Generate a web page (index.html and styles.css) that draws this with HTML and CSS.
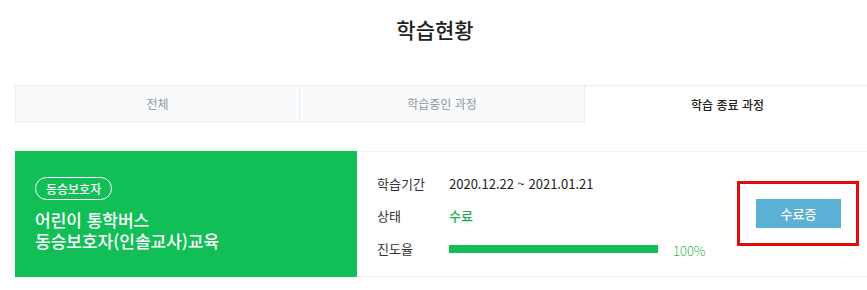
FILE: index.html
```html
<!DOCTYPE html>
<html lang="ko">
<head>
<meta charset="utf-8">
<link rel="stylesheet" href="styles.css">
</head>
<body>
<div class="page">
  <h1 class="title">학습현황</h1>
  <div class="tabs">
    <div class="tab">전체</div>
    <div class="tab">학습중인 과정</div>
    <div class="tab active">학습 종료 과정</div>
  </div>
  <div class="card">
    <div class="course">
      <span class="badge">동승보호자</span>
      <div class="course-name">어린이 통학버스<br>동승보호자(인솔교사)교육</div>
    </div>
    <div class="info">
      <div class="rows">
        <div class="row"><span class="label">학습기간</span><span class="value">2020.12.22 ~ 2021.01.21</span></div>
        <div class="row"><span class="label">상태</span><span class="value status">수료</span></div>
        <div class="row"><span class="label">진도율</span><span class="bar"><span class="fill" style="width:100%"></span></span><span class="pct">100%</span></div>
      </div>
      <div class="highlight">
        <button class="cert">수료증</button>
      </div>
    </div>
  </div>
</div>
</body>
</html>
```

FILE: styles.css
```css
* { box-sizing: border-box; }
body {
  margin: 0;
  background: #fff;
  font-family: "Noto Sans CJK KR", "Noto Sans", sans-serif;
  color: #222;
}
.page {
  padding: 0 0 0 15px;
  width: 885px;
}
.title {
  margin: 0;
  height: 85px;
  padding-top: 14px;
  font-size: 21px;
  font-weight: 500;
  line-height: 30px;
  text-align: center;
  width: 840px;
  color: #222;
}
.tabs {
  display: flex;
  height: 37px;
}
.tab {
  width: 285px;
  display: flex;
  align-items: center;
  justify-content: center;
  font-size: 12px;
  color: #8e979f;
  background: #f8fafc;
  border: 1px solid #e9eef2;
  border-left: none;
}
.tab:first-child { border-left: 1px solid #e9eef2; }
.tab.active {
  background: #fff;
  color: #222;
  font-weight: 500;
  border-bottom: none;
  border-right: none;
}
.card {
  margin-top: 29px;
  display: flex;
  height: 126px;
  border-top: 1px solid #f0f4f6;
  border-bottom: 1px solid #eef2f4;
}
.course {
  width: 342px;
  background: #12bf57;
  color: #fff;
  padding: 24px 20px 0;
  margin: -1px 0;
  height: 126px;
}
.badge {
  display: inline-block;
  height: 23px;
  line-height: 21px;
  padding: 0 10px;
  border: 1px solid #fff;
  border-radius: 12px;
  font-size: 12px;
  font-weight: 500;
}
.course-name {
  margin-top: 9px;
  font-size: 17px;
  line-height: 21px;
  font-weight: 500;
}
.info {
  flex: 1;
  display: flex;
  align-items: flex-start;
  padding: 15px 0 0 20px;
}
.rows {
  width: 360px;
}
.row {
  display: flex;
  align-items: center;
  height: 32.5px;
  font-size: 13px;
}
.label {
  width: 72px;
  color: #333;
}
.value { color: #222; }
.status { color: #14b04f; font-weight: 500; }
.bar {
  width: 209px;
  height: 8px;
  background: #e6e6e6;
  margin-top: 1px;
}
.fill {
  display: block;
  height: 100%;
  background: #12bf57;
}
.pct {
  margin-left: 15px;
  margin-top: 5px;
  color: #3cb552;
  font-weight: 300;
  font-size: 13px;
}
.highlight {
  margin-left: 0;
  margin-top: 14px;
  width: 122px;
  height: 65px;
  border: 3px solid #e10d0d;
  padding: 15px 0 0 16px;
}
.cert {
  display: block;
  width: 85px;
  height: 29px;
  border: none;
  background: #5bb0d5;
  color: #fff;
  font-family: inherit;
  font-size: 13px;
  font-weight: 500;
  padding: 0;
  cursor: pointer;
}
```
